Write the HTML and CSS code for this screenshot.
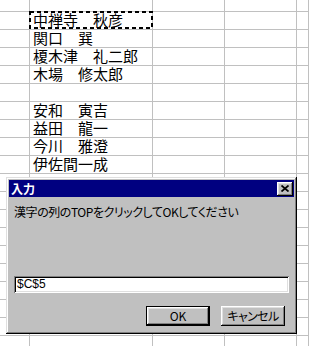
FILE: index.html
```html
<!DOCTYPE html>
<html lang="ja">
<head>
<meta charset="utf-8">
<link rel="stylesheet" href="styles.css">
</head>
<body>
<div class="sheet">
  <div class="c"></div><div class="c"></div><div class="c"></div><div class="c"></div><div class="c"></div>
  <div class="c"></div><div class="c sel">中禅寺　秋彦<svg class="ants" width="124" height="18"><rect x="1" y="1" width="122" height="16" fill="none" stroke="#000" stroke-width="2" stroke-dasharray="4 3"/></svg></div><div class="c"></div><div class="c"></div><div class="c"></div>
  <div class="c"></div><div class="c">関口　巽</div><div class="c"></div><div class="c"></div><div class="c"></div>
  <div class="c"></div><div class="c">榎木津　礼二郎</div><div class="c"></div><div class="c"></div><div class="c"></div>
  <div class="c"></div><div class="c">木場　修太郎</div><div class="c"></div><div class="c"></div><div class="c"></div>
  <div class="c"></div><div class="c"></div><div class="c"></div><div class="c"></div><div class="c"></div>
  <div class="c"></div><div class="c">安和　寅吉</div><div class="c"></div><div class="c"></div><div class="c"></div>
  <div class="c"></div><div class="c">益田　龍一</div><div class="c"></div><div class="c"></div><div class="c"></div>
  <div class="c"></div><div class="c">今川　雅澄</div><div class="c"></div><div class="c"></div><div class="c"></div>
  <div class="c"></div><div class="c">伊佐間一成</div><div class="c"></div><div class="c"></div><div class="c"></div>
  <div class="c"></div><div class="c"></div><div class="c"></div><div class="c"></div><div class="c"></div>
  <div class="c"></div><div class="c"></div><div class="c"></div><div class="c"></div><div class="c"></div>
  <div class="c"></div><div class="c"></div><div class="c"></div><div class="c"></div><div class="c"></div>
  <div class="c"></div><div class="c"></div><div class="c"></div><div class="c"></div><div class="c"></div>
  <div class="c"></div><div class="c"></div><div class="c"></div><div class="c"></div><div class="c"></div>
  <div class="c"></div><div class="c"></div><div class="c"></div><div class="c"></div><div class="c"></div>
  <div class="c"></div><div class="c"></div><div class="c"></div><div class="c"></div><div class="c"></div>
  <div class="c"></div><div class="c"></div><div class="c"></div><div class="c"></div><div class="c"></div>
  <div class="c"></div><div class="c"></div><div class="c"></div><div class="c"></div><div class="c"></div>
  <div class="c"></div><div class="c"></div><div class="c"></div><div class="c"></div><div class="c"></div>
</div>

<div class="dialog">
  <div class="titlebar">
    <span class="title">入力</span>
    <span class="close"><svg width="8" height="7" viewBox="0 0 8 7"><path d="M0.5 0.5L7.5 6.5M7.5 0.5L0.5 6.5" stroke="#000" stroke-width="1.7" fill="none"/></svg></span>
  </div>
  <div class="body">
    <div class="msg">漢字の列のTOPをクリックしてOKしてください</div>
    <div class="field">$C$5</div>
    <div class="buttons">
      <div class="btn default">OK</div>
      <div class="btn cancel">キャンセル</div>
    </div>
  </div>
</div>
</body>
</html>
```

FILE: styles.css
```css
html, body {
  margin: 0;
  padding: 0;
  width: 309px;
  height: 346px;
  overflow: hidden;
  background: #fff;
}

.sheet {
  display: grid;
  grid-template-columns: 30px 123px 72px 72px 1fr;
  grid-template-rows: 12px repeat(19, 18px);
  width: 309px;
}

.c {
  box-sizing: border-box;
  border-right: 1px solid #c0c0c0;
  border-bottom: 1px solid #c0c0c0;
  font-family: "Liberation Sans", "Noto Sans CJK JP", sans-serif;
  font-size: 15px;
  line-height: 17px;
  padding-left: 3px;
  white-space: nowrap;
  overflow: hidden;
  color: #000;
}

.sel {
  position: relative;
  overflow: visible;
}

.ants {
  position: absolute;
  left: -1px;
  top: -1px;
}

.dialog {
  position: absolute;
  left: 6px;
  top: 177px;
  width: 291px;
  height: 157px;
  box-sizing: border-box;
  background: #c0c0c0;
  padding: 3px;
  box-shadow: inset -1px -1px #000, inset 1px 1px #dfdfdf, inset -2px -2px #808080, inset 2px 2px #fff;
  display: flex;
  flex-direction: column;
  font-family: "Noto Sans CJK JP", sans-serif;
  font-size: 12px;
  font-feature-settings: "palt";
  color: #000;
}

.titlebar {
  height: 17px;
  background: #000080;
  display: flex;
  align-items: center;
  justify-content: space-between;
  padding: 0 1px 0 2px;
}

.title {
  color: #fff;
  font-weight: bold;
  font-size: 12px;
  line-height: 14px;
}

.close {
  width: 16px;
  height: 14px;
  box-sizing: border-box;
  background: #c0c0c0;
  box-shadow: inset -1px -1px #000, inset 1px 1px #fff, inset -2px -2px #808080, inset 2px 2px #dfdfdf;
  display: flex;
  align-items: center;
  justify-content: center;
  padding: 0 1px 1px 0;
}

.body {
  flex: 1;
  display: flex;
  flex-direction: column;
  padding: 8px 5px 0 5px;
}

.msg {
  line-height: 14px;
  height: 14px;
  white-space: nowrap;
  letter-spacing: -0.45px;
}

.field {
  margin-top: 57px;
  height: 17px;
  box-sizing: border-box;
  background: #fff;
  box-shadow: inset 1px 1px #808080, inset -1px -1px #fff, inset 2px 2px #000, inset -2px -2px #dfdfdf;
  padding: 0 3px;
  line-height: 17px;
  font-family: "Liberation Sans", sans-serif;
  font-size: 12px;
}

.buttons {
  display: flex;
  justify-content: flex-end;
  gap: 11px;
  margin-top: 13px;
  padding-right: 4px;
}

.btn {
  width: 64px;
  height: 20px;
  box-sizing: border-box;
  display: flex;
  align-items: center;
  justify-content: center;
  line-height: 14px;
  box-shadow: inset -1px -1px #000, inset 1px 1px #fff, inset -2px -2px #808080, inset 2px 2px #dfdfdf;
}

.btn.cancel {
  letter-spacing: -0.6px;
}

.btn.default {
  border: 1px solid #000;
}
```
